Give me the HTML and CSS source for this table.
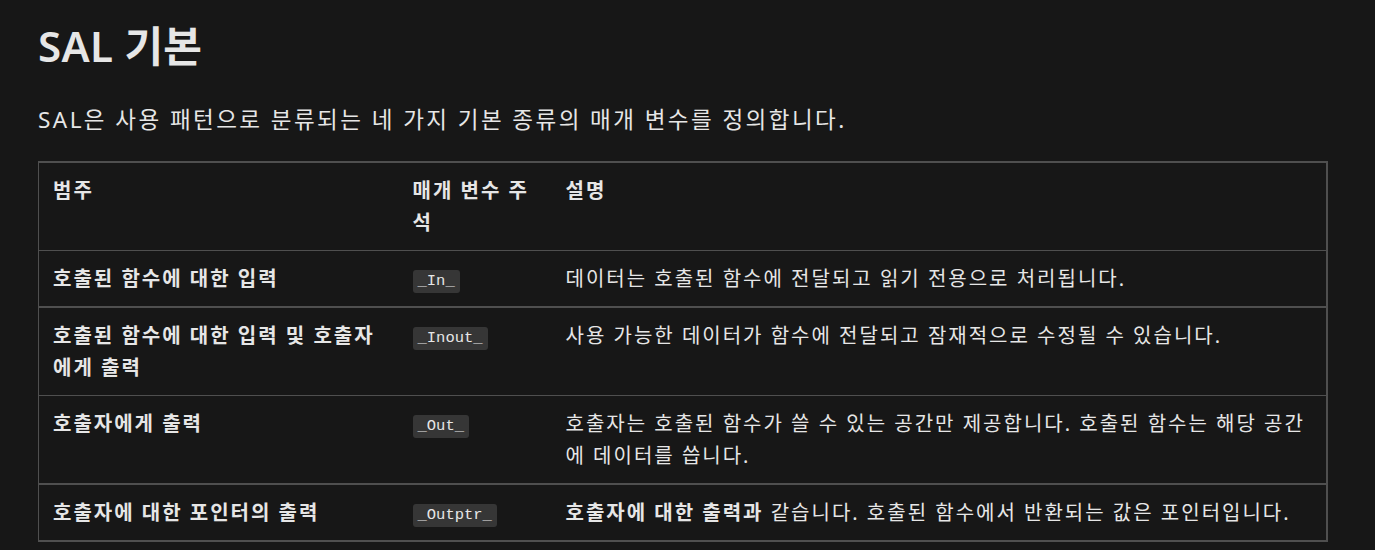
FILE: index.html
```html
<!DOCTYPE html>
<html lang="ko">
<head>
<meta charset="utf-8">
<title>SAL 기본</title>
<link rel="stylesheet" href="styles.css">
</head>
<body>
<main class="content">
  <h1 class="title">SAL 기본</h1>
  <p class="intro">SAL은 사용 패턴으로 분류되는 네 가지 기본 종류의 매개 변수를 정의합니다.</p>
  <table class="params">
    <colgroup>
      <col class="c1">
      <col class="c2">
      <col class="c3">
    </colgroup>
    <thead>
      <tr class="head">
        <th>범주</th>
        <th>매개 변수 주석</th>
        <th>설명</th>
      </tr>
    </thead>
    <tbody>
      <tr class="r1">
        <td class="cat">호출된 함수에 대한 입력</td>
        <td><code>_In_</code></td>
        <td>데이터는 호출된 함수에 전달되고 읽기 전용으로 처리됩니다.</td>
      </tr>
      <tr class="r2">
        <td class="cat">호출된 함수에 대한 입력 및 호출자에게 출력</td>
        <td><code>_Inout_</code></td>
        <td>사용 가능한 데이터가 함수에 전달되고 잠재적으로 수정될 수 있습니다.</td>
      </tr>
      <tr class="r3">
        <td class="cat">호출자에게 출력</td>
        <td><code>_Out_</code></td>
        <td>호출자는 호출된 함수가 쓸 수 있는 공간만 제공합니다. 호출된 함수는 해당 공간에 데이터를 씁니다.</td>
      </tr>
      <tr class="r4">
        <td class="cat">호출자에 대한 포인터의 출력</td>
        <td><code>_Outptr_</code></td>
        <td><strong>호출자에 대한 출력과</strong> 같습니다. 호출된 함수에서 반환되는 값은 포인터입니다.</td>
      </tr>
    </tbody>
  </table>
</main>
</body>
</html>
```

FILE: styles.css
```css
html, body {
  margin: 0;
  padding: 0;
  background: #171717;
}

body {
  color: #e6e6e6;
  font-family: "Noto Sans", "Noto Sans CJK KR", sans-serif;
}

.content {
  padding: 14px 0 0 38px;
  width: 1291px;
}

.title {
  margin: 0;
  font-size: 42px;
  line-height: 64px;
  font-weight: 600;
  letter-spacing: 0.3px;
}

.intro {
  margin: 25px 0 24px 0;
  font-size: 22.5px;
  line-height: 34px;
  letter-spacing: 2.45px;
}

.params {
  width: 1290px;
  border-collapse: collapse;
  table-layout: fixed;
  border-top: 2px solid #4f4f4f;
  border-right: 2px solid #4f4f4f;
  border-bottom: 2px solid #4f4f4f;
  border-left: 1px solid #4f4f4f;
  font-size: 20px;
  line-height: 32px;
  letter-spacing: 2px;
}

.c1 { width: 360px; }
.c2 { width: 153px; }

.params th,
.params td {
  padding: 12px 14px 11px 14px;
  text-align: left;
  vertical-align: top;
}

.params th {
  font-weight: 700;
}

.head { border-bottom: 1px solid #4f4f4f; }
.r2 { border-top: 2px solid #4f4f4f; }
.r3 { border-top: 1px solid #4f4f4f; }
.r4 { border-top: 2px solid #4f4f4f; }

.cat {
  font-weight: 700;
}

.params code {
  display: inline-block;
  font-family: "Liberation Mono", "DejaVu Sans Mono", monospace;
  font-size: 15.5px;
  line-height: 23px;
  padding: 0 5px;
  letter-spacing: 0;
  background: #363636;
  border-radius: 3px;
  vertical-align: 1px;
}

.params strong {
  font-weight: 700;
}
```
